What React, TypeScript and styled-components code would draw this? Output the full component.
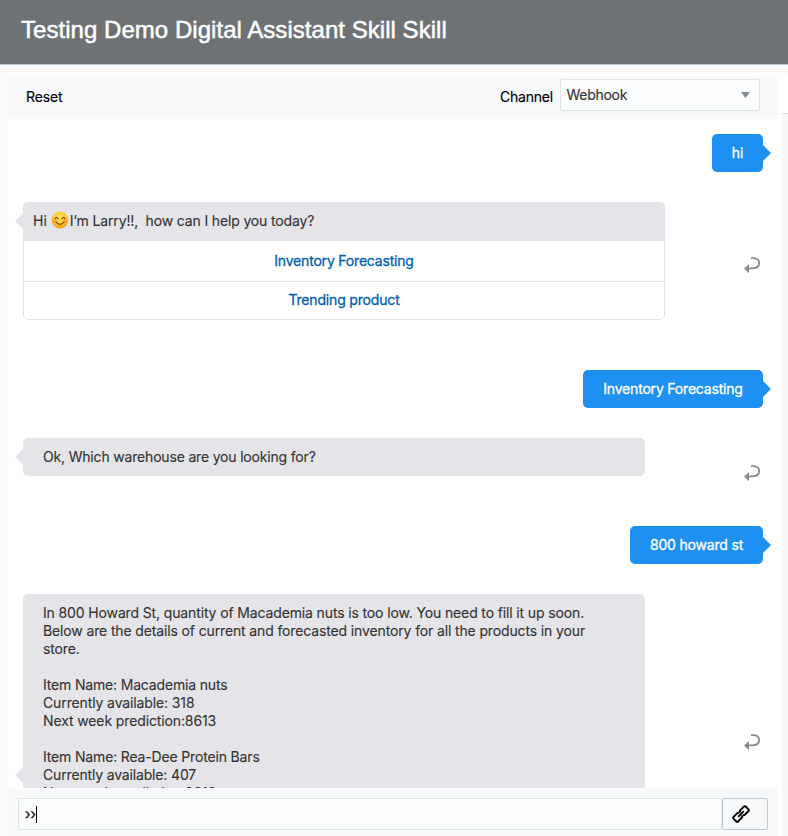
import React from "react";
import styled, { createGlobalStyle } from "styled-components";

const GlobalStyle = createGlobalStyle`
  * { box-sizing: border-box; }
  body {
    margin: 0;
    background: #fcfcfc;
    font-family: Inter, "Liberation Sans", sans-serif;
    font-size: 14px;
    line-height: 18px;
    color: #333333;
  }
`;

const Page = styled.div`
  display: flex;
  flex-direction: column;
  width: 788px;
  height: 836px;
  overflow: hidden;
`;

const Header = styled.header`
  flex: none;
  height: 65px;
  padding: 16px 21px 0;
  background: #6e7275;
  border-bottom: 1px solid #b9c8d4;
`;

const Title = styled.h1`
  margin: 0;
  font: 400 24px/28px "Liberation Sans", Arial, sans-serif;
  letter-spacing: 0.04px;
  color: #ffffff;
  -webkit-text-stroke: 0.5px #ffffff;
  white-space: nowrap;
`;

const Body = styled.div`
  flex: 1;
  min-height: 0;
  margin-top: 12px;
  display: grid;
  grid-template-columns: 8px 770px 4px 6px;
`;

const Panel = styled.main`
  grid-column: 2;
  min-height: 0;
  display: flex;
  flex-direction: column;
  background: #ffffff;
`;

const Gap = styled.div`
  background: #ffffff;
`;

const SidePane = styled.aside`
  background: #f7f7f7;
  &::before {
    content: "";
    display: block;
    height: 36px;
    background: #ffffff;
    border-bottom: 1px solid #d3dce4;
  }
`;

const Toolbar = styled.div`
  flex: none;
  height: 42px;
  padding: 2px 18px 0;
  display: flex;
  align-items: flex-start;
  background: #f7f9fb;
  color: #000000;
`;

const ToolText = styled.span<{ $spacing: number }>`
  margin-top: 9px;
  letter-spacing: ${(p) => p.$spacing}px;
  -webkit-text-stroke: 0.15px currentColor;
`;

const ChannelGroup = styled.label`
  margin-left: auto;
  display: flex;
  gap: 7px;
`;

const Select = styled.div`
  width: 200px;
  height: 32px;
  padding: 0 9px 0 5.5px;
  display: flex;
  align-items: center;
  justify-content: space-between;
  background: #fcfdfe;
  border: 1px solid #dfe4e7;
  border-radius: 2px;
  color: #333333;
  letter-spacing: -0.28px;
  -webkit-text-stroke: 0.15px currentColor;
`;

const Chat = styled.div`
  flex: 1;
  min-height: 0;
  overflow: hidden;
  padding: 15px 15px 0;
  display: flex;
  flex-direction: column;
`;

const UserBubble = styled.div<{ $width: number; $spacing?: number }>`
  position: relative;
  flex: none;
  align-self: flex-end;
  width: ${(p) => p.$width}px;
  height: 38px;
  margin-bottom: 30px;
  padding: 10px 0;
  border-radius: 5px;
  background: #1e90f2;
  color: #ffffff;
  text-align: center;
  white-space: nowrap;
  letter-spacing: ${(p) => p.$spacing ?? 0}px;
  -webkit-text-stroke: 0.3px currentColor;
  &::after {
    content: "";
    position: absolute;
    left: 100%;
    top: 11px;
    border: solid transparent;
    border-width: 8px 0 8px 8px;
    border-left-color: #1e90f2;
  }
`;

const BotRow = styled.div<{ $height: number }>`
  flex: none;
  height: ${(p) => p.$height}px;
  display: flex;
  justify-content: space-between;
  align-items: flex-start;
  margin-bottom: 50px;
`;

const botTail = `
  content: "";
  position: absolute;
  border: solid transparent;
  border-width: 8px 8px 8px 0;
  border-right-color: #e5e4e9;
`;

const BotBubble = styled.div<{ $height: number }>`
  position: relative;
  width: 622px;
  height: ${(p) => p.$height}px;
  padding: 10px 20px;
  border-radius: 5px;
  background: #e5e4e9;
  -webkit-text-stroke: 0.12px currentColor;
  &::before {
    ${botTail}
    left: -8px;
    top: calc(50% - 8px);
  }
`;

const Line = styled.div<{ $spacing?: number }>`
  height: 18px;
  white-space: pre;
  letter-spacing: ${(p) => p.$spacing ?? 0}px;
`;

const Card = styled.div`
  position: relative;
  width: 642px;
  height: 118px;
  border: 1px solid #e5e4e9;
  border-radius: 5px;
  -webkit-text-stroke: 0.12px currentColor;
  &::before {
    ${botTail}
    left: -9px;
    top: 10px;
  }
`;

const CardHeader = styled.div`
  display: flex;
  height: 38px;
  padding: 9px 9px;
  background: #e5e4e9;
`;

const Choice = styled.div<{ $height: number; $spacing: number }>`
  display: flex;
  align-items: center;
  justify-content: center;
  height: ${(p) => p.$height}px;
  color: #005fad;
  letter-spacing: ${(p) => p.$spacing}px;
  -webkit-text-stroke: 0.3px currentColor;
  & + & {
    border-top: 1px solid #e9e9ed;
  }
`;

const Emoji = styled.svg`
  width: 18px;
  height: 18px;
  flex: none;
  margin: -1px 1px 0 4px;
`;

const ReplyIcon = styled.svg<{ $top: number }>`
  flex: none;
  width: 18px;
  height: 18px;
  margin: ${(p) => p.$top}px 2px 0 0;
`;

const Composer = styled.div`
  flex: none;
  height: 48px;
  padding: 10px 10px 0;
  display: flex;
  background: #f7f9fb;
`;

const Input = styled.div`
  display: flex;
  align-items: center;
  width: 704px;
  height: 32px;
  padding-left: 6px;
  background: #fcfdfe;
  border: 1px solid #dfe4e7;
  border-radius: 2px;
  color: #222222;
  -webkit-text-stroke: 0.4px currentColor;
`;

const Caret = styled.span`
  width: 1px;
  height: 17px;
  background: #000000;
`;

const LinkButton = styled.button`
  width: 46px;
  height: 32px;
  padding: 0 8px 0 0;
  display: flex;
  align-items: center;
  justify-content: center;
  background: #f7f9fb;
  border: 1px solid #bdcbd6;
  border-radius: 2px;
`;

const Reply = ({ top }: { top: number }) => (
  <ReplyIcon $top={top} viewBox="0 0 18 18">
    <path d="M8 2.1h1.6c3.9 0 6.5 1.6 6.5 4.7 0 3.5-2.8 5.6-7 5.6H5" fill="none" stroke="#888d91" strokeWidth="1.9" />
    <path d="M1 12.6 6 8v9.2z" fill="#888d91" />
  </ReplyIcon>
);

const Smile = () => (
  <Emoji viewBox="0 0 18 18" role="img" aria-label="smiling face">
    <defs>
      <radialGradient id="face" cx="50%" cy="35%" r="65%">
        <stop offset="0" stopColor="#ffe45c" />
        <stop offset="0.65" stopColor="#fcc72e" />
        <stop offset="1" stopColor="#ec8e1b" />
      </radialGradient>
    </defs>
    <circle cx="9" cy="9" r="8.5" fill="url(#face)" />
    <ellipse cx="3.8" cy="10" rx="2" ry="1.5" fill="#f5793b" opacity=".6" />
    <ellipse cx="14.2" cy="10" rx="2" ry="1.5" fill="#f5793b" opacity=".6" />
    <path d="M4 7.8Q5.6 5 7.2 7.8M10.8 7.8Q12.4 5 14 7.8M5 11.2Q9 15.6 13 11.2" fill="none" stroke="#794510" strokeWidth="1.1" strokeLinecap="round" />
  </Emoji>
);

const LinkIcon = () => (
  <svg width="18" height="18" viewBox="0 0 18 18" fill="none" stroke="#000" strokeWidth="1.9">
    <g transform="rotate(-45 9 9)">
      <path d="M8.2 10.4v.6A1.2 1.2 0 0 1 7 12.2H1.6A1.2 1.2 0 0 1 .4 11V7a1.2 1.2 0 0 1 1.2-1.2H7A1.2 1.2 0 0 1 8.2 7v.4" />
      <path d="M9.8 7.6V7A1.2 1.2 0 0 1 11 5.8h5.4A1.2 1.2 0 0 1 17.6 7v4a1.2 1.2 0 0 1-1.2 1.2H11A1.2 1.2 0 0 1 9.8 11v-.4" />
      <path d="M5 9h8" />
    </g>
  </svg>
);

const forecast: { text: string; spacing?: number }[] = [
  { text: "In 800 Howard St, quantity of Macademia nuts is too low. You need to fill it up soon.", spacing: -0.135 },
  { text: "Below are the details of current and forecasted inventory for all the products in your", spacing: -0.135 },
  { text: "store.", spacing: -0.13 },
  { text: "" },
  { text: "Item Name: Macademia nuts", spacing: -0.17 },
  { text: "Currently available: 318", spacing: -0.12 },
  { text: "Next week prediction:8613", spacing: -0.12 },
  { text: "" },
  { text: "Item Name: Rea-Dee Protein Bars", spacing: -0.16 },
  { text: "Currently available: 407", spacing: -0.16 },
  { text: "Next week prediction:3313", spacing: -0.12 },
];

export default function App() {
  return (
    <>
      <GlobalStyle />
      <Page>
        <Header>
          <Title>Testing Demo Digital Assistant Skill Skill</Title>
        </Header>
        <Body>
          <Panel>
            <Toolbar>
              <ToolText $spacing={-0.1}>Reset</ToolText>
              <ChannelGroup>
                <ToolText $spacing={-0.2}>Channel</ToolText>
                <Select>
                  Webhook
                  <svg width="9" height="6" viewBox="0 0 9 6">
                    <path d="M0 0h9L4.5 6z" fill="#858b90" />
                  </svg>
                </Select>
              </ChannelGroup>
            </Toolbar>
            <Chat>
              <UserBubble $width={51}>hi</UserBubble>
              <BotRow $height={118}>
                <Card>
                  <CardHeader>
                    <Line>Hi</Line>
                    <Smile />
                    <Line $spacing={-0.15}>{"I’m Larry!!,  how can I help you today?"}</Line>
                  </CardHeader>
                  <Choice $height={40} $spacing={-0.19}>Inventory Forecasting</Choice>
                  <Choice $height={37} $spacing={-0.17}>Trending product</Choice>
                </Card>
                <Reply top={54} />
              </BotRow>
              <UserBubble $width={180} $spacing={-0.19}>Inventory Forecasting</UserBubble>
              <BotRow $height={38}>
                <BotBubble $height={38}>
                  <Line $spacing={-0.18}>Ok, Which warehouse are you looking for?</Line>
                </BotBubble>
                <Reply top={26} />
              </BotRow>
              <UserBubble $width={133} $spacing={-0.19}>800 howard st</UserBubble>
              <BotRow $height={362}>
                <BotBubble $height={362}>
                  {forecast.map((l, i) => (
                    <Line key={i} $spacing={l.spacing}>{l.text}</Line>
                  ))}
                </BotBubble>
                <Reply top={139} />
              </BotRow>
            </Chat>
            <Composer>
              <Input>
                ››
                <Caret />
              </Input>
              <LinkButton aria-label="Attach link">
                <LinkIcon />
              </LinkButton>
            </Composer>
          </Panel>
          <Gap />
          <SidePane />
        </Body>
      </Page>
    </>
  );
}
